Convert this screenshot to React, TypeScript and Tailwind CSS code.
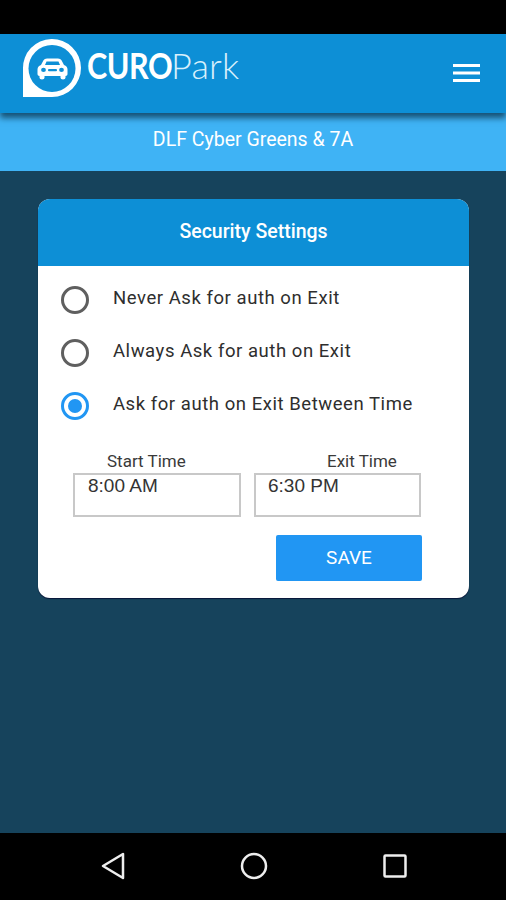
const options = [
  { label: 'Never Ask for auth on Exit', selected: false },
  { label: 'Always Ask for auth on Exit', selected: false },
  { label: 'Ask for auth on Exit Between Time', selected: true },
];

function Logo() {
  return (
    <svg width="60" height="60" viewBox="0 0 60 60" className="shrink-0">
      <path d="M1 58 L1 30 A29 29 0 1 1 30 58 Z" fill="#ffffff" />
      <circle cx="30" cy="29.500" r="23.500" fill="#0d8fd6" />
      <g transform="translate(0 6.400) scale(1 0.875)">
        <path
          d="M19 22.500 L21.500 17 Q22.500 15 25 15 L36 15 Q38.500 15 39.500 17 L42 22.500 Q45.500 24 45.500 27.500 L45.500 33 Q45.500 35 43.500 35 L43.500 37 Q43.500 39 41 39 Q38.500 39 38.500 37 L38.500 35 L22.500 35 L22.500 37 Q22.500 39 20 39 Q17.500 39 17.500 37 L17.500 35 Q15.500 35 15.500 33 L15.500 27.500 Q15.500 24 19 22.500 Z"
          fill="#ffffff"
        />
        <path d="M23 22.500 L24.500 18.500 L36.500 18.500 L38 22.500 Z" fill="#0d8fd6" />
        <circle cx="21.500" cy="28" r="2.400" fill="#0d8fd6" />
        <circle cx="39.500" cy="28" r="2.400" fill="#0d8fd6" />
        <rect x="26" y="27" width="9" height="2.500" rx="1" fill="#0d8fd6" />
      </g>
    </svg>
  );
}

function Radio({ selected }: { selected: boolean }) {
  return (
    <span
      className={`flex items-center justify-center w-[28px] h-[28px] rounded-full border-[3px] shrink-0 ${
        selected ? 'border-[#2196f3]' : 'border-[#5f5f5f]'
      }`}
    >
      {selected && <span className="w-[14px] h-[14px] rounded-full bg-[#2196f3]" />}
    </span>
  );
}

function TimeField({ label, value, width, labelClass, valueClass }: { label: string; value: string; width: string; labelClass: string; valueClass: string }) {
  return (
    <div className={width}>
      <div className={`text-[17px] leading-[22px] mb-[1px] text-[#3a3a3a] ${labelClass}`}>{label}</div>
      <div className={`h-[44px] border-2 border-[#c8c8c8] text-[19px] leading-[22px] text-[#333333] font-['Liberation_Sans',sans-serif] ${valueClass}`}>
        {value}
      </div>
    </div>
  );
}

export default function App() {
  return (
    <div className="w-[506px] h-[900px] flex flex-col bg-black font-['Roboto',sans-serif] overflow-hidden">
      <div className="h-[34px] shrink-0 bg-black" />

      <header className="relative z-10 h-[79px] shrink-0 flex items-center justify-between pl-[22px] pr-[25px] bg-[#0d8fd6] shadow-[0_5px_6px_rgba(10,50,75,0.75)]">
        <div className="flex items-center gap-[5px] -mt-[10px]">
          <Logo />
          <div className="flex items-baseline text-white text-[36px] leading-none font-['Lato',sans-serif] -mt-[8px]">
            <span className="inline-block w-[84px] origin-left scale-x-[0.85] font-bold tracking-[-0.5px]">CURO</span>
            <span className="font-light tracking-[0.2px] text-[#d8f0fc]">Park</span>
          </div>
        </div>
        <svg width="28" height="20" viewBox="0 0 28 20" className="-mt-[2px]">
          <rect x="0" y="1" width="27" height="3" fill="#ffffff" />
          <rect x="0" y="8.500" width="27" height="3" fill="#ffffff" />
          <rect x="0" y="16" width="27" height="3" fill="#ffffff" />
        </svg>
      </header>

      <div className="h-[58px] shrink-0 flex items-center justify-center pb-[4px] bg-[#3fb3f5] text-white text-[19.500px]">
        DLF Cyber Greens &amp; 7A
      </div>

      <main className="flex-1 bg-[#16435c] pt-[28px] px-[38px]">
        <section className="w-[431px] h-[399px] rounded-[12px] bg-white overflow-hidden shadow-[0_1px_1px_rgba(0,0,40,0.7)]">
          <div className="h-[67px] flex items-center justify-center pb-[2px] bg-[#0d8fd6] text-white text-[19.500px] font-medium">
            Security Settings
          </div>
          <div className="pt-[7px] pl-[23px] flex flex-col">
            {options.map((o) => (
              <div key={o.label} className="h-[53px] flex items-center gap-[24px]">
                <Radio selected={o.selected} />
                <span className="text-[18.500px] tracking-[0.55px] text-[#2e2e2e] -mt-[1px]">{o.label}</span>
              </div>
            ))}
          </div>
          <div className="mt-[18px] ml-[35px] flex gap-[13px]">
            <TimeField label="Start Time" value="8:00 AM" width="w-[168px]" labelClass="pl-[34px]" valueClass="pl-[13px]" />
            <TimeField label="Exit Time" value="6:30 PM" width="w-[167px]" labelClass="pl-[73px]" valueClass="pl-[12px]" />
          </div>
          <div className="mt-[18px] pr-[47px] flex justify-end">
            <button className="w-[146px] h-[46px] rounded-[2px] bg-[#2196f3] text-white text-[19px] pt-[1px]">SAVE</button>
          </div>
        </section>
      </main>

      <nav className="h-[67px] shrink-0 bg-black flex items-center justify-between pl-[101px] pr-[99px] pb-[1px]">
        <svg width="24" height="28" viewBox="0 0 24 28" fill="none" stroke="#eeeeee" strokeWidth="2.500" strokeLinejoin="round">
          <path d="M2 14 L22 2 L22 26 Z" />
        </svg>
        <svg width="28" height="28" viewBox="0 0 28 28" fill="none" stroke="#eeeeee" strokeWidth="2.500">
          <circle cx="14" cy="14" r="12" />
        </svg>
        <svg width="24" height="24" viewBox="0 0 24 24" fill="none" stroke="#eeeeee" strokeWidth="2.500" strokeLinejoin="round">
          <rect x="1.500" y="1.500" width="21" height="21" rx="1" />
        </svg>
      </nav>
    </div>
  );
}
